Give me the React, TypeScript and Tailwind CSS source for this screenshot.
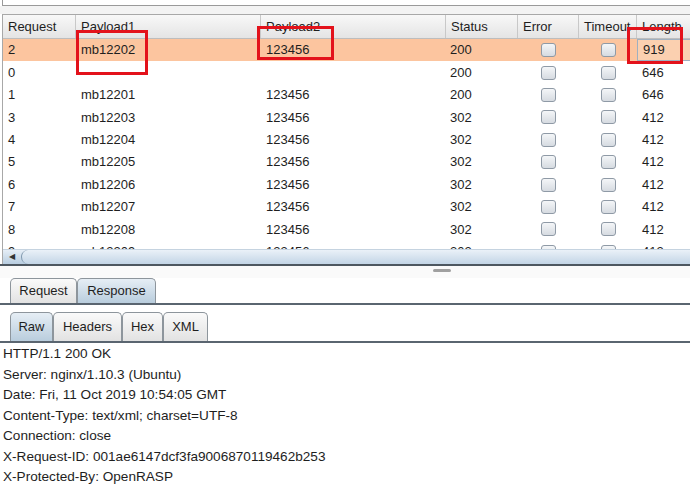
import React from "react";

type Row = { req: string; p1: string; p2: string; status: string; len: string; hl?: boolean };

const rows: Row[] = [
  { req: "2", p1: "mb12202", p2: "123456", status: "200", len: "919", hl: true },
  { req: "0", p1: "", p2: "", status: "200", len: "646" },
  { req: "1", p1: "mb12201", p2: "123456", status: "200", len: "646" },
  { req: "3", p1: "mb12203", p2: "123456", status: "302", len: "412" },
  { req: "4", p1: "mb12204", p2: "123456", status: "302", len: "412" },
  { req: "5", p1: "mb12205", p2: "123456", status: "302", len: "412" },
  { req: "6", p1: "mb12206", p2: "123456", status: "302", len: "412" },
  { req: "7", p1: "mb12207", p2: "123456", status: "302", len: "412" },
  { req: "8", p1: "mb12208", p2: "123456", status: "302", len: "412" },
  { req: "9", p1: "mb12209", p2: "123456", status: "302", len: "412" },
];

const cols = "grid grid-cols-[73px_185px_185px_72px_61px_58px_56px]";

const responseLines = [
  "HTTP/1.1 200 OK",
  "Server: nginx/1.10.3 (Ubuntu)",
  "Date: Fri, 11 Oct 2019 10:54:05 GMT",
  "Content-Type: text/xml; charset=UTF-8",
  "Connection: close",
  "X-Request-ID: 001ae6147dcf3fa9006870119462b253",
  "X-Protected-By: OpenRASP",
];

function Check() {
  return (
    <div className="flex items-center justify-center">
      <div className="w-[15px] h-[14px] rounded-[3px] border border-[#8f9aa6] bg-gradient-to-b from-[#f4f6f8] to-[#d6dbe1]" />
    </div>
  );
}

function Tab({ label, active, w }: { label: string; active?: boolean; w: string }) {
  return (
    <div
      className={`${w} h-full flex items-center justify-center rounded-t-[5px] border border-b-0 border-[#8d959c] ${
        active ? "bg-gradient-to-b from-[#e6eef5] to-[#b9cddd]" : "bg-gradient-to-b from-[#fafafa] to-[#e2e2e2]"
      }`}
    >
      {label}
    </div>
  );
}

export default function App() {
  return (
    <div
      className="w-[690px] h-[487px] overflow-hidden bg-white text-[13px] text-[#1e1e1e] relative"
      style={{ fontFamily: '"Liberation Sans", Arial, sans-serif' }}
    >
      {/* top frame */}
      <div className="h-[6px] ml-[2px] border-l border-b border-[#9a9a9a] bg-white" />
      <div className="h-[8px] bg-[#f3f3f3]" />

      {/* table */}
      <div className="ml-[2px] border-l border-t border-[#a8a8a8]">
        <div className={`${cols} h-[24px] bg-gradient-to-b from-[#f8f8f8] to-[#e4e4e4] border-b border-[#bdbdbd]`}>
          {["Request", "Payload1", "Payload2", "Status", "Error", "Timeout", "Length"].map((h) => (
            <div key={h} className="flex items-center pl-[5px] border-r border-[#c8c8c8] whitespace-nowrap overflow-hidden">
              {h}
            </div>
          ))}
        </div>
        <div className="h-[210px] overflow-hidden">
          {rows.map((r) => (
            <div key={r.req} className={`${cols} h-[22.4px] items-center ${r.hl ? "bg-[#fcc59f]" : "bg-white"}`}>
              <div className="pl-[5px]">{r.req}</div>
              <div className="pl-[5px]">{r.p1}</div>
              <div className="pl-[5px]">{r.p2}</div>
              <div className="pl-[4px]">{r.status}</div>
              <Check />
              <Check />
              <div
                className={`pl-[5px] h-full flex items-center ${
                  r.hl ? "bg-[#fbd0b0] border border-[#9fb0c0]" : ""
                }`}
              >
                {r.len}
              </div>
            </div>
          ))}
        </div>
        {/* horizontal scrollbar */}
        <div className="h-[15px] flex items-center bg-gradient-to-b from-[#e6eef6] to-[#b8cde0] border-t border-[#c5d3e0]">
          <div className="w-[18px] flex justify-center text-[8px] text-[#333]">◀</div>
          <div className="flex-1 h-full rounded-l-[10px] border-l border-[#7f97ad] bg-gradient-to-b from-[#eaf1f8] to-[#c3d5e6]" />
        </div>
      </div>
      <div className="h-[2px] bg-[#4d5760]" />

      {/* splitter */}
      <div className="h-[12px] flex justify-center pl-[194px] pt-[3px] bg-[#fafafa]">
        <div className="w-[18px] h-[3px] rounded-sm bg-[#a0a0a0]" />
      </div>

      {/* request / response tabs */}
      <div className="h-[25px] flex pl-[10px] bg-white">
        <Tab label="Request" w="w-[67px]" />
        <Tab label="Response" active w="w-[79px]" />
      </div>
      <div className="h-[2px] bg-[#5a6570]" />
      <div className="h-[7px] bg-white" />

      {/* raw / headers tabs */}
      <div className="h-[29px] flex pl-[10px] bg-white">
        <Tab label="Raw" active w="w-[43px]" />
        <Tab label="Headers" w="w-[69px]" />
        <Tab label="Hex" w="w-[41px]" />
        <Tab label="XML" w="w-[45px]" />
      </div>
      <div className="h-[2px] bg-[#5a6570]" />

      {/* response text */}
      <div className="pl-[3px] pt-[1px] text-[13.6px] leading-[20.5px]">
        {responseLines.map((l) => (
          <div key={l}>{l}</div>
        ))}
      </div>

      {/* red highlight boxes */}
      <div className="absolute left-[76px] top-[30px] w-[72px] h-[45px] border-[3px] border-[#e3121b]" />
      <div className="absolute left-[257px] top-[26px] w-[77px] h-[34px] border-[3px] border-[#e3121b]" />
      <div className="absolute left-[627px] top-[27px] w-[56px] h-[37px] border-[3px] border-[#e3121b]" />
    </div>
  );
}
